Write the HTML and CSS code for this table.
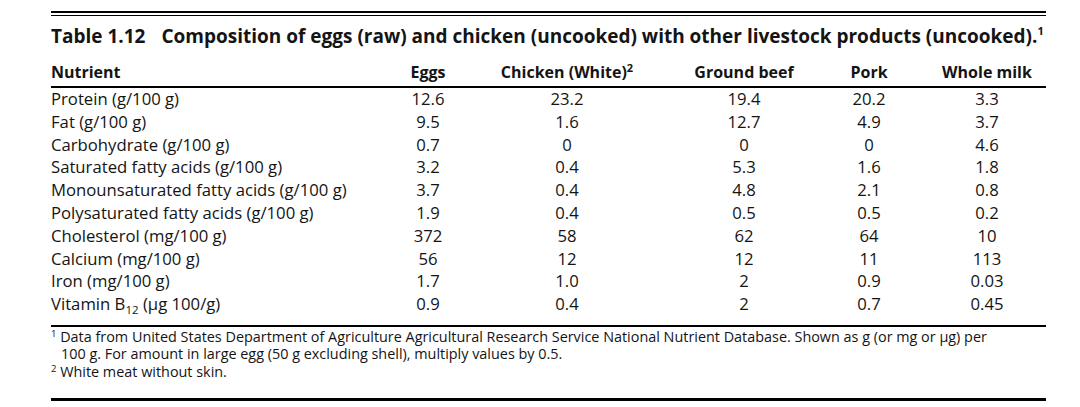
FILE: index.html
```html
<!DOCTYPE html>
<html lang="en">
<head>
<meta charset="utf-8">
<title>Table 1.12</title>
<link rel="stylesheet" href="styles.css">
</head>
<body>
<div class="tbl">
  <h1 class="caption"><span class="label">Table 1.12</span><span class="caption-text">Composition of eggs (raw) and chicken (uncooked) with other livestock products (uncooked).<sup>1</sup></span></h1>
  <table class="data">
    <colgroup>
      <col class="c-name"><col class="c-eggs"><col class="c-chicken"><col class="c-beef"><col class="c-pork"><col class="c-milk">
    </colgroup>
    <thead>
      <tr><th class="name">Nutrient</th><th>Eggs</th><th>Chicken (White)<sup>2</sup></th><th>Ground beef</th><th>Pork</th><th>Whole milk</th></tr>
    </thead>
    <tbody>
      <tr><td class="name">Protein (g/100 g)</td><td>12.6</td><td>23.2</td><td>19.4</td><td>20.2</td><td>3.3</td></tr>
      <tr><td class="name">Fat (g/100 g)</td><td>9.5</td><td>1.6</td><td>12.7</td><td>4.9</td><td>3.7</td></tr>
      <tr><td class="name">Carbohydrate (g/100 g)</td><td>0.7</td><td>0</td><td>0</td><td>0</td><td>4.6</td></tr>
      <tr><td class="name">Saturated fatty acids (g/100 g)</td><td>3.2</td><td>0.4</td><td>5.3</td><td>1.6</td><td>1.8</td></tr>
      <tr><td class="name">Monounsaturated fatty acids (g/100 g)</td><td>3.7</td><td>0.4</td><td>4.8</td><td>2.1</td><td>0.8</td></tr>
      <tr><td class="name">Polysaturated fatty acids (g/100 g)</td><td>1.9</td><td>0.4</td><td>0.5</td><td>0.5</td><td>0.2</td></tr>
      <tr><td class="name">Cholesterol (mg/100 g)</td><td>372</td><td>58</td><td>62</td><td>64</td><td>10</td></tr>
      <tr><td class="name">Calcium (mg/100 g)</td><td>56</td><td>12</td><td>12</td><td>11</td><td>113</td></tr>
      <tr><td class="name">Iron (mg/100 g)</td><td>1.7</td><td>1.0</td><td>2</td><td>0.9</td><td>0.03</td></tr>
      <tr><td class="name">Vitamin B<sub>12</sub> (µg 100/g)</td><td>0.9</td><td>0.4</td><td>2</td><td>0.7</td><td>0.45</td></tr>
    </tbody>
  </table>
  <div class="notes">
    <p class="note"><sup>1</sup> Data from United States Department of Agriculture Agricultural Research Service National Nutrient Database. Shown as g (or mg or µg) per<br>100&nbsp;g. For amount in large egg (50 g excluding shell), multiply values by 0.5.</p>
    <p class="note"><sup>2</sup> White meat without skin.</p>
  </div>
</div>
</body>
</html>
```
FILE: styles.css
```css
html, body {
  margin: 0;
  padding: 0;
  background: #ffffff;
}

body {
  color: #141414;
  font-family: "Open Sans", "Noto Sans", sans-serif;
}

.tbl {
  width: 995px;
  margin: 11px 0 0 51px;
  border-top: 2px solid #000;
  border-bottom: 3px solid #000;
}

.caption {
  margin: 2px 0 0;
  padding: 8px 0 13px;
  border-top: 1px solid #000;
  font-size: 19px;
  line-height: 24px;
  font-weight: 700;
  white-space: nowrap;
}

.caption .label {
  display: inline-block;
  margin-right: 16px;
}

.caption sup {
  font-size: 11px;
  line-height: 0;
  vertical-align: 8px;
}

.data {
  width: 995px;
  border-collapse: collapse;
  table-layout: fixed;
}

.c-name { width: 349px; }
.c-eggs { width: 56px; }
.c-chicken { width: 222px; }
.c-beef { width: 132px; }
.c-pork { width: 118px; }
.c-milk { width: 118px; }

.data th,
.data td {
  padding: 0;
  text-align: center;
  white-space: nowrap;
}

.data th {
  font-size: 16px;
  font-weight: 700;
  line-height: 22px;
  padding-bottom: 3px;
  border-bottom: 2px solid #000;
}

.data td {
  font-size: 16.7px;
  font-weight: 400;
  line-height: 22.8px;
}

.data .name {
  text-align: left;
}

.data th sup {
  font-size: 11px;
  line-height: 0;
  vertical-align: 6px;
}

.data td sub {
  font-size: 11.5px;
  line-height: 0;
  vertical-align: -4px;
}

.data tbody tr:last-child td {
  padding-bottom: 9px;
  border-bottom: 2px solid #000;
}

.notes {
  padding: 1px 0 18px;
}

.note {
  margin: 0;
  padding-left: 10px;
  text-indent: -10px;
  font-size: 14.4px;
  line-height: 17.5px;
}

.note sup {
  font-size: 9.5px;
  line-height: 0;
  vertical-align: 5px;
}
```
